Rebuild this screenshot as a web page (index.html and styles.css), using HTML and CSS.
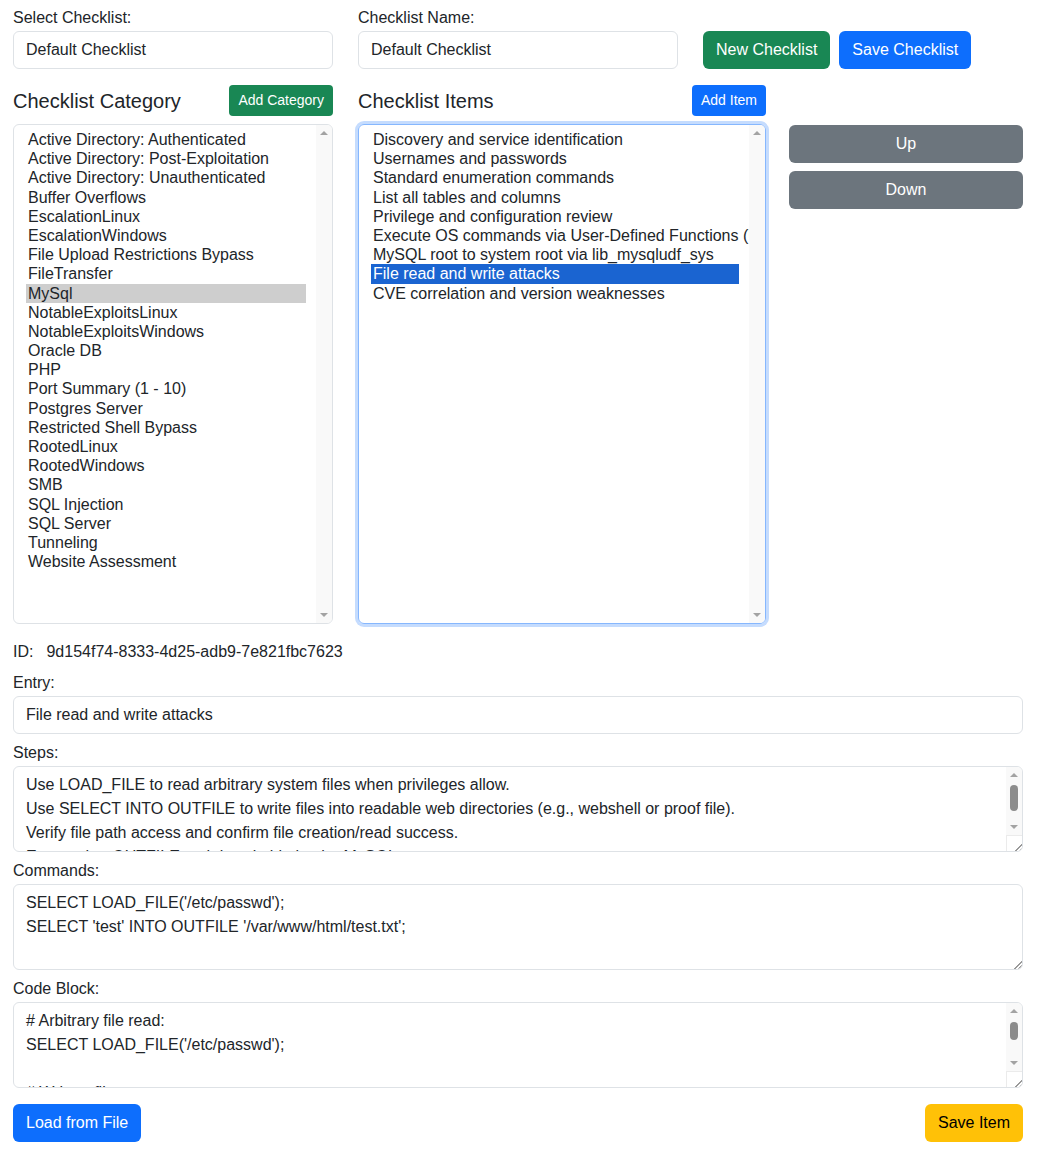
FILE: index.html
```html
<!DOCTYPE html>
<html lang="en">
<head>
    <meta charset="UTF-8">
    <meta name="viewport" content="width=device-width, initial-scale=1.0">
    <title>Checklist Editor</title>
    <link rel="stylesheet" href="styles.css">
</head>

<body>
    <div class="page">
        <div class="top-row">
            <div class="col-narrow">
                <label for="checklistSelect">Select Checklist:</label>
                <input type="text" id="checklistSelect" class="form-control" value="Default Checklist" readonly>
            </div>
            <div class="col-narrow">
                <label for="checklistName">Checklist Name:</label>
                <input type="text" id="checklistName" class="form-control" value="Default Checklist">
            </div>
            <div class="top-actions">
                <button class="btn btn-success">New Checklist</button>
                <button class="btn btn-primary">Save Checklist</button>
            </div>
        </div>

        <div class="lists-row">
            <div class="col-category">
                <div class="list-head">
                    <h5>Checklist Category</h5>
                    <button class="btn btn-sm btn-success">Add Category</button>
                </div>
                <div class="listbox">
                    <ul class="options">
                        <li>Active Directory: Authenticated</li>
                        <li>Active Directory: Post-Exploitation</li>
                        <li>Active Directory: Unauthenticated</li>
                        <li>Buffer Overflows</li>
                        <li>EscalationLinux</li>
                        <li>EscalationWindows</li>
                        <li>File Upload Restrictions Bypass</li>
                        <li>FileTransfer</li>
                        <li class="selected-idle">MySql</li>
                        <li>NotableExploitsLinux</li>
                        <li>NotableExploitsWindows</li>
                        <li>Oracle DB</li>
                        <li>PHP</li>
                        <li>Port Summary (1 - 10)</li>
                        <li>Postgres Server</li>
                        <li>Restricted Shell Bypass</li>
                        <li>RootedLinux</li>
                        <li>RootedWindows</li>
                        <li>SMB</li>
                        <li>SQL Injection</li>
                        <li>SQL Server</li>
                        <li>Tunneling</li>
                        <li>Website Assessment</li>
                    </ul>
                    <div class="vscroll">
                        <span class="arrow arrow-up"></span>
                        <span class="track"></span>
                        <span class="arrow arrow-down"></span>
                    </div>
                </div>
            </div>

            <div class="col-items">
                <div class="list-head">
                    <h5>Checklist Items</h5>
                    <button class="btn btn-sm btn-primary">Add Item</button>
                </div>
                <div class="listbox focused">
                    <ul class="options">
                        <li>Discovery and service identification</li>
                        <li>Usernames and passwords</li>
                        <li>Standard enumeration commands</li>
                        <li>List all tables and columns</li>
                        <li>Privilege and configuration review</li>
                        <li>Execute OS commands via User-Defined Functions (UDF)</li>
                        <li>MySQL root to system root via lib_mysqludf_sys</li>
                        <li class="selected">File read and write attacks</li>
                        <li>CVE correlation and version weaknesses</li>
                    </ul>
                    <div class="vscroll">
                        <span class="arrow arrow-up"></span>
                        <span class="track"></span>
                        <span class="arrow arrow-down"></span>
                    </div>
                </div>
            </div>

            <div class="col-move">
                <button class="btn btn-secondary">Up</button>
                <button class="btn btn-secondary">Down</button>
            </div>
        </div>

        <div class="id-row">
            <span>ID:</span>
            <span id="itemId">9d154f74-8333-4d25-adb9-7e821fbc7623</span>
        </div>

        <div class="field">
            <label for="entry">Entry:</label>
            <input type="text" id="entry" class="form-control" value="File read and write attacks">
        </div>

        <div class="field">
            <label for="steps">Steps:</label>
            <div class="text-box">
                <textarea id="steps">Use LOAD_FILE to read arbitrary system files when privileges allow.
Use SELECT INTO OUTFILE to write files into readable web directories (e.g., webshell or proof file).
Verify file path access and confirm file creation/read success.
Ensure that OUTFILE path is writable by the MySQL user.</textarea>
                <div class="vscroll">
                    <span class="arrow arrow-up"></span>
                    <span class="track"><span class="thumb thumb-steps"></span></span>
                    <span class="arrow arrow-down"></span>
                    <span class="corner boxed"></span>
                </div>
            </div>
        </div>

        <div class="field">
            <label for="commands">Commands:</label>
            <div class="text-box">
                <textarea id="commands">SELECT LOAD_FILE('/etc/passwd');
SELECT 'test' INTO OUTFILE '/var/www/html/test.txt';</textarea>
                <div class="vscroll bare">
                    <span class="track"></span>
                    <span class="corner"></span>
                </div>
            </div>
        </div>

        <div class="field">
            <label for="codeBlock">Code Block:</label>
            <div class="text-box">
                <textarea id="codeBlock"># Arbitrary file read:
SELECT LOAD_FILE('/etc/passwd');

# Write a file:
SELECT 'test' INTO OUTFILE '/var/www/html/test.txt';</textarea>
                <div class="vscroll">
                    <span class="arrow arrow-up"></span>
                    <span class="track"><span class="thumb thumb-code"></span></span>
                    <span class="arrow arrow-down"></span>
                    <span class="corner boxed"></span>
                </div>
            </div>
        </div>

        <div class="bottom-actions">
            <button class="btn btn-primary">Load from File</button>
            <button class="btn btn-warning">Save Item</button>
        </div>
    </div>
</body>

</html>
```

FILE: styles.css
```css
body {
    font-family: "Liberation Sans", Arial, sans-serif;
    font-size: 16px;
    color: #212529;
    background-color: #fff;
    margin: 0;
}

.page {
    width: 1010px;
    margin-left: 13px;
    padding-top: 6px;
}

label {
    display: block;
    line-height: 24px;
    margin-bottom: 1px;
}

.form-control {
    display: block;
    box-sizing: border-box;
    width: 100%;
    height: 38px;
    padding: 6px 12px;
    font: inherit;
    line-height: 24px;
    color: #212529;
    border: 1px solid #dee2e6;
    border-radius: 6px;
    outline: none;
}

.btn {
    font: inherit;
    line-height: 24px;
    padding: 6px 12px;
    border: 1px solid transparent;
    border-radius: 6px;
    color: #fff;
    cursor: pointer;
}

.btn-sm {
    font-size: 14px;
    line-height: 21px;
    padding: 4px 8px;
    border-radius: 4px;
}

.btn-success {
    background-color: #198754;
}

.btn-primary {
    background-color: #0d6efd;
}

.btn-secondary {
    background-color: #6c757d;
}

.btn-warning {
    background-color: #ffc107;
    color: #000;
}

/* top row */
.top-row {
    display: flex;
    align-items: flex-start;
    gap: 25px;
}

.col-narrow {
    width: 320px;
}

.top-actions {
    display: flex;
    gap: 9px;
    padding-top: 25px;
}

/* category / items lists */
.lists-row {
    display: flex;
    align-items: flex-start;
    margin-top: 16px;
}

.col-category {
    width: 320px;
    margin-right: 25px;
}

.col-items {
    width: 408px;
    margin-right: 23px;
}

.col-move {
    width: 234px;
    display: flex;
    flex-direction: column;
    gap: 8px;
    padding-top: 40px;
}

.col-move .btn {
    width: 100%;
}

.list-head {
    display: flex;
    justify-content: space-between;
    align-items: center;
    height: 31px;
    margin-bottom: 8px;
}

.list-head h5 {
    margin: 0;
    font-size: 20px;
    font-weight: normal;
    line-height: 24px;
}

.listbox {
    display: flex;
    box-sizing: border-box;
    height: 500px;
    border: 1px solid #dee2e6;
    border-radius: 6px;
    overflow: hidden;
}

.listbox.focused {
    border-color: #86b7fe;
    box-shadow: 0 0 0 3px #c5dcfe;
}

.options {
    flex: 1;
    list-style: none;
    margin: 0;
    padding: 5px 10px 0 12px;
    overflow: hidden;
}

.options li {
    padding-left: 2px;
    line-height: 19.2px;
    height: 19.2px;
    white-space: nowrap;
}

.options li.selected-idle {
    background-color: #cecece;
}

.options li.selected {
    background-color: #1a64d1;
    color: #fff;
}

/* drawn scrollbars */
.vscroll {
    width: 16px;
    display: flex;
    flex-direction: column;
    background-color: #f9f9f9;
}

.vscroll.bare {
    background-color: transparent;
}

.arrow {
    height: 16px;
    display: flex;
    align-items: center;
    justify-content: center;
}

.arrow::after {
    content: "";
    width: 0;
    height: 0;
    border-left: 4px solid transparent;
    border-right: 4px solid transparent;
}

.arrow-up::after {
    border-bottom: 4px solid #a3a3a3;
}

.arrow-down::after {
    border-top: 4px solid #a3a3a3;
}

.track {
    flex: 1;
    display: flex;
    justify-content: center;
}

.thumb {
    width: 8px;
    border-radius: 4px;
    background-color: #8c8c8c;
}

.thumb-steps {
    height: 26px;
    margin-top: 2px;
}

.thumb-code {
    height: 18px;
    margin-top: 3px;
}

.corner {
    height: 15px;
    background-color: #fff;
    background-image: linear-gradient(135deg, transparent 16px, #999 16px, #999 17px, transparent 17px, transparent 19px, #999 19px, #999 20px, transparent 20px);
}

.corner.boxed {
    border-top: 1px solid #ebebeb;
    border-left: 1px solid #ebebeb;
}

/* item details */
.id-row {
    display: flex;
    gap: 13px;
    line-height: 24px;
    margin-top: 16px;
    margin-bottom: 7px;
}

.field {
    margin-bottom: 7px;
}

.text-box {
    display: flex;
    box-sizing: border-box;
    height: 86px;
    border: 1px solid #dee2e6;
    border-radius: 6px;
    overflow: hidden;
}

.text-box textarea {
    flex: 1;
    border: none;
    outline: none;
    resize: none;
    overflow: hidden;
    padding: 6px 12px;
    font: inherit;
    line-height: 24px;
    color: #212529;
    background: transparent;
}

.bottom-actions {
    display: flex;
    justify-content: space-between;
    margin-top: 16px;
}
```
